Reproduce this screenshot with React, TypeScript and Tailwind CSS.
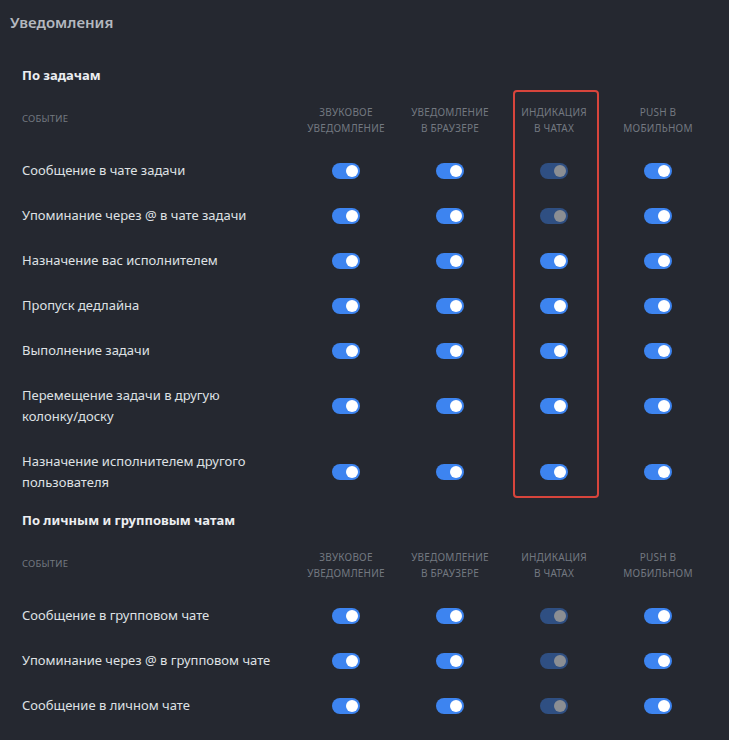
import React from "react";

type Row = { label: string[]; vals: ("on" | "dis")[] };

const cols = [
  ["Звуковое", "уведомление"],
  ["Уведомление", "в браузере"],
  ["Индикация", "в чатах"],
  ["Push в", "мобильном"],
];

const sec1: Row[] = [
  { label: ["Сообщение в чате задачи"], vals: ["on", "on", "dis", "on"] },
  { label: ["Упоминание через @ в чате задачи"], vals: ["on", "on", "dis", "on"] },
  { label: ["Назначение вас исполнителем"], vals: ["on", "on", "on", "on"] },
  { label: ["Пропуск дедлайна"], vals: ["on", "on", "on", "on"] },
  { label: ["Выполнение задачи"], vals: ["on", "on", "on", "on"] },
  { label: ["Перемещение задачи в другую", "колонку/доску"], vals: ["on", "on", "on", "on"] },
  { label: ["Назначение исполнителем другого", "пользователя"], vals: ["on", "on", "on", "on"] },
];

const sec2: Row[] = [
  { label: ["Сообщение в групповом чате"], vals: ["on", "on", "dis", "on"] },
  { label: ["Упоминание через @ в групповом чате"], vals: ["on", "on", "dis", "on"] },
  { label: ["Сообщение в личном чате"], vals: ["on", "on", "dis", "on"] },
];

function Toggle({ state }: { state: "on" | "dis" }) {
  if (state === "on") {
    return (
      <div className="w-[28px] h-[16px] rounded-full bg-[#3d84f0] flex items-center justify-end pr-[2px]">
        <div className="w-[12px] h-[12px] rounded-full bg-white" />
      </div>
    );
  }
  return (
    <div className="w-[28px] h-[16px] rounded-full bg-[#2f4f82] flex items-center justify-end pr-[2px]">
      <div className="w-[12px] h-[12px] rounded-full bg-[#8b8e93]" />
    </div>
  );
}

function Section({ title, rows, box }: { title: string; rows: Row[]; box?: boolean }) {
  return (
    <div className="relative">
      <div className="h-[31px] flex items-center pl-[22px] text-[13px] font-bold text-[#eceef1]">{title}</div>
      <div className="h-[57px] flex items-center pl-[22px] pr-[19px]">
        <div className="flex-1 text-[9.5px] uppercase text-[#737880] tracking-[0.2px]">Событие</div>
        {cols.map((c, i) => (
          <div key={i} className="w-[104px] flex flex-col items-center text-[10px] uppercase leading-[16px] text-[#737880] tracking-[0.2px]">
            <span>{c[0]}</span>
            <span>{c[1]}</span>
          </div>
        ))}
      </div>
      {rows.map((r, i) => (
        <div key={i} className="flex items-center pl-[22px] pr-[19px] py-[12px]">
          <div className="flex-1 text-[13px] leading-[21px] text-[#dfe1e4]">
            {r.label.map((l, j) => (
              <div key={j}>{l}</div>
            ))}
          </div>
          {r.vals.map((v, j) => (
            <div key={j} className="w-[104px] flex justify-center">
              <Toggle state={v} />
            </div>
          ))}
        </div>
      ))}
      {box && (
        <div className="absolute left-[513px] top-[30px] w-[86px] h-[408px] border-2 border-[#d8453c] rounded-[4px]" />
      )}
    </div>
  );
}

export default function App() {
  return (
    <div className="w-[729px] h-[740px] overflow-hidden bg-[#252830]" style={{ fontFamily: '"Noto Sans", "Open Sans", sans-serif' }}>
      <div className="h-[45px] flex items-center pl-[10px] text-[15px] font-semibold text-[#b4b8bf]">Уведомления</div>
      <div className="h-[15px]" />
      <Section title="По задачам" rows={sec1} box />
      <Section title="По личным и групповым чатам" rows={sec2} />
    </div>
  );
}
